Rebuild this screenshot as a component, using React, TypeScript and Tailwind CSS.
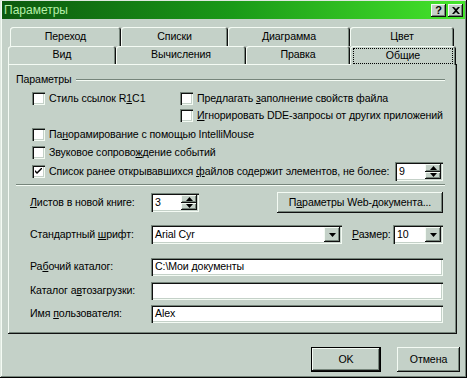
import React from 'react';

const raised = 'shadow-[inset_-1px_-1px_0_#101010,inset_1px_1px_0_#f4fbf4,inset_-2px_-2px_0_#76857b]';
const sunken = 'shadow-[inset_1px_1px_0_#76857b,inset_2px_2px_0_#101010,inset_-1px_-1px_0_#f4fbf4,inset_-2px_-2px_0_#c4d1c8]';
const tabCls = 'shadow-[inset_1px_1px_0_#f4fbf4,inset_-1px_0_0_#101010,inset_-2px_0_0_#76857b] rounded-t-[3px] flex items-center justify-center';

function UpTri() {
  return (
    <svg width="7" height="4" viewBox="0 0 7 4"><path d="M3.5 0 L7 4 L0 4 Z" fill="#000" /></svg>
  );
}
function DownTri({ w = 7, h = 4 }: { w?: number; h?: number }) {
  return (
    <svg width={w} height={h} viewBox={`0 0 ${w} ${h}`}><path d={`M0 0 L${w} 0 L${w / 2} ${h} Z`} fill="#000" /></svg>
  );
}

function Check({ checked = false }: { checked?: boolean }) {
  return (
    <div className={`w-[13px] h-[13px] bg-white shrink-0 ${sunken} flex items-center justify-center`}>
      {checked && (
        <svg width="7" height="7" viewBox="0 0 7 7">
          <path d="M0 2 L0 4 L2 6 L7 1 L7 -1 L2 4 Z" fill="#000" />
        </svg>
      )}
    </div>
  );
}

function CheckRow({ children, checked }: { children: React.ReactNode; checked?: boolean }) {
  return (
    <div className="flex items-center gap-[4px] whitespace-nowrap">
      <Check checked={checked} />
      <span>{children}</span>
    </div>
  );
}

function Spin({ value, w }: { value: string; w: string }) {
  return (
    <div className={`flex h-full bg-white ${sunken} p-[2px] ${w}`}>
      <div className="flex-1 pl-[2px] flex items-center">{value}</div>
      <div className="w-[16px] flex flex-col">
        <div className={`flex-1 bg-[#c4d1c8] ${raised} flex items-center justify-center`}><UpTri /></div>
        <div className={`flex-1 bg-[#c4d1c8] ${raised} flex items-center justify-center`}><DownTri /></div>
      </div>
    </div>
  );
}

function Combo({ value, w }: { value: string; w: string }) {
  return (
    <div className={`flex h-full bg-white ${sunken} p-[2px] ${w}`}>
      <div className="flex-1 pl-[2px] flex items-center">{value}</div>
      <div className={`w-[16px] bg-[#c4d1c8] ${raised} flex items-center justify-center`}><DownTri /></div>
    </div>
  );
}

function Field({ value }: { value: string }) {
  return (
    <div className={`flex-1 h-full bg-white ${sunken} pl-[4px] flex items-center`}>{value}</div>
  );
}

export default function App() {
  return (
    <div
      className="w-[467px] h-[378px] bg-[#c4d1c8] flex flex-col px-[2px] pt-[1px] text-[10.6px] tracking-[-0.1px] text-black shadow-[inset_-1px_-1px_0_#000,inset_1px_1px_0_#dfe8e0,inset_-2px_-2px_0_#76857b,inset_2px_2px_0_#f4fbf4] overflow-hidden"
      style={{ fontFamily: '"Liberation Sans", Arial, sans-serif' }}
    >
      {/* Title bar */}
      <div className="h-[18px] flex items-center pl-[2px] pr-[2px] bg-gradient-to-r from-[#0c5a0e] via-[#1a9a18] to-[#45e62c]">
        <span className="text-[12px] tracking-normal text-[#b6f0a8] flex-1">Параметры</span>
        <div className={`w-[15px] h-[13px] bg-[#c4d1c8] ${raised} flex items-center justify-center text-[11px] font-bold leading-none`}>?</div>
        <div className={`ml-[2px] w-[15px] h-[13px] bg-[#c4d1c8] ${raised} flex items-center justify-center`}>
          <svg width="8" height="7" viewBox="0 0 8 7">
            <path d="M0 0 L2 0 L4 2 L6 0 L8 0 L5 3.5 L8 7 L6 7 L4 5 L2 7 L0 7 L3 3.5 Z" fill="#000" />
          </svg>
        </div>
      </div>

      {/* Tabs row 1 */}
      <div className="flex ml-[8px] mt-[8px] h-[19px]">
        <div className={`w-[111px] ${tabCls}`}>Переход</div>
        <div className={`w-[107px] ${tabCls}`}>Списки</div>
        <div className={`w-[122px] ${tabCls}`}>Диаграмма</div>
        <div className={`w-[104px] ${tabCls}`}>Цвет</div>
      </div>
      {/* Tabs row 2 */}
      <div className="flex ml-[6px] h-[18px] relative z-10">
        <div className={`w-[108px] ${tabCls}`}>Вид</div>
        <div className={`w-[130px] ${tabCls}`}>Вычисления</div>
        <div className={`w-[104px] ${tabCls}`}>Правка</div>
        <div className={`w-[106px] h-[19px] bg-[#c4d1c8] ${tabCls} px-[3px] pt-[2px] pb-[1px]`}>
          <div className="w-full h-full border border-dotted border-black flex items-center justify-center">Общие</div>
        </div>
      </div>

      {/* Panel */}
      <div className="ml-[6px] w-[449px] h-[270px] shadow-[inset_-1px_-1px_0_#101010,inset_1px_1px_0_#f4fbf4,inset_-2px_-2px_0_#76857b] pl-[8px] pr-[12px] pt-[9px] flex flex-col">
        <div className="h-[14px] flex items-center gap-[4px]">
          <span>Параметры</span>
          <div className="flex-1 h-[2px] border-t border-t-[#76857b] border-b border-b-[#f4fbf4]" />
        </div>
        <div className="flex mt-[3px] pl-[16px]">
          <div className="w-[148px] h-[17px] flex items-center">
            <CheckRow>Стиль ссылок R<u>1</u>C1</CheckRow>
          </div>
          <div className="h-[17px] flex items-center">
            <CheckRow>Предлагать <u>з</u>аполнение свойств файла</CheckRow>
          </div>
        </div>
        <div className="h-[17px] flex items-center pl-[164px]">
          <CheckRow><u>И</u>гнорировать DDE-запросы от других приложений</CheckRow>
        </div>
        <div className="h-[19px] mt-[1px] flex items-center pl-[16px]">
          <CheckRow>Па<u>н</u>орамирование с помощью IntelliMouse</CheckRow>
        </div>
        <div className="h-[17px] flex items-center pl-[16px]">
          <CheckRow>Звуковое сопрово<u>ж</u>дение событий</CheckRow>
        </div>
        <div className="h-[19px] mt-[1px] flex items-center pl-[16px] pr-[2px]">
          <div className="flex-1">
            <CheckRow checked>Список ранее открывавшихся <u>ф</u>айлов содержит элементов, не более:</CheckRow>
          </div>
          <Spin value="9" w="w-[48px]" />
        </div>
        <div className="mt-[3px] h-[2px] border-t border-t-[#76857b] border-b border-b-[#f4fbf4]" />

        <div className="mt-[7px] h-[19px] flex items-center pl-[14px] pr-[2px]">
          <span className="w-[121px]"><u>Л</u>истов в новой книге:</span>
          <Spin value="3" w="w-[48px]" />
          <div className="flex-1" />
          <div className={`w-[166px] h-[21px] ${raised} flex items-center justify-center`}>П<u>а</u>раметры Web-документа...</div>
        </div>

        <div className="mt-[13px] h-[19px] flex items-center pl-[14px] pr-[2px]">
          <span className="w-[121px]">Стандартный <u>ш</u>рифт:</span>
          <Combo value="Arial Cyr" w="w-[191px]" />
          <span className="ml-[10px] w-[41px]"><u>Р</u>азмер:</span>
          <Combo value="10" w="flex-1" />
        </div>

        <div className="mt-[14px] h-[18px] flex items-center pl-[14px] pr-[2px]">
          <span className="w-[121px]">Ра<u>б</u>очий каталог:</span>
          <Field value="C:\Мои документы" />
        </div>
        <div className="mt-[6px] h-[18px] flex items-center pl-[14px] pr-[2px]">
          <span className="w-[121px]">Каталог а<u>в</u>тозагрузки:</span>
          <Field value="" />
        </div>
        <div className="mt-[5px] h-[18px] flex items-center pl-[14px] pr-[2px]">
          <span className="w-[121px]">Имя <u>п</u>ользователя:</span>
          <Field value="Alex" />
        </div>
      </div>

      {/* Footer */}
      <div className="mt-[13px] flex pl-[309px] gap-[16px]">
        <div className="w-[70px] h-[25px] shadow-[inset_0_0_0_1px_#000,inset_-2px_-2px_0_#101010,inset_2px_2px_0_#f4fbf4,inset_-3px_-3px_0_#76857b] flex items-center justify-center">OK</div>
        <div className={`w-[63px] h-[25px] ${raised} flex items-center justify-center`}>Отмена</div>
      </div>
    </div>
  );
}
